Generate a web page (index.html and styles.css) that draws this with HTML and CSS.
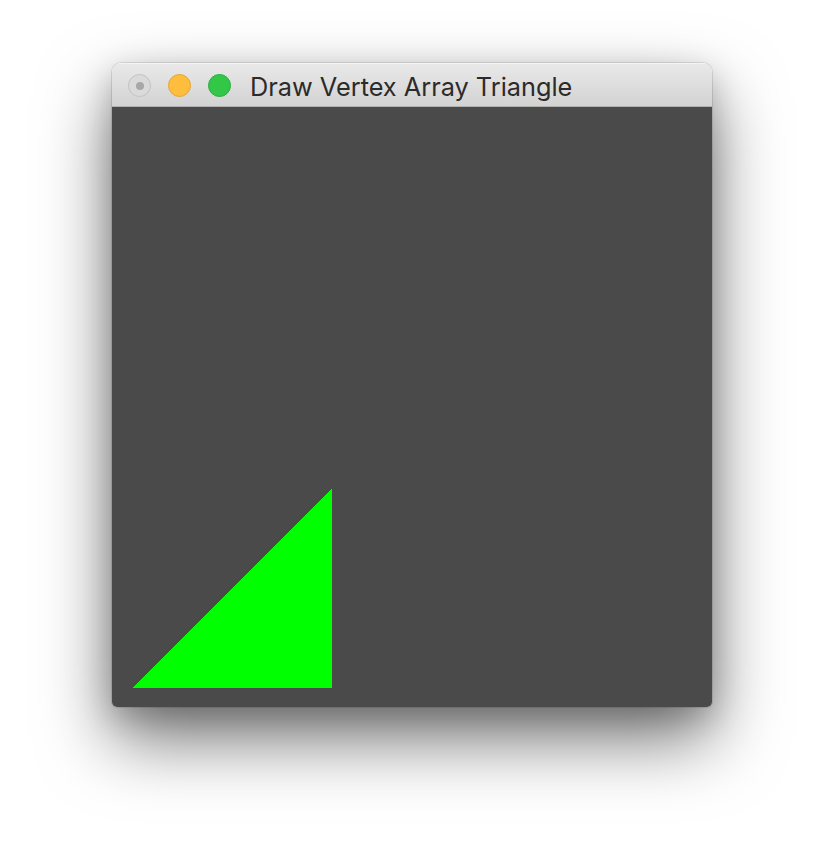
FILE: index.html
```html
<!DOCTYPE html>
<html>
<head>
<meta charset="utf-8">
<link rel="stylesheet" href="styles.css">
</head>
<body>
<div class="page">
  <div class="window">
    <div class="titlebar">
      <div class="lights">
        <span class="light close"><span class="dot"></span></span>
        <span class="light min"></span>
        <span class="light max"></span>
      </div>
      <div class="title">Draw Vertex Array Triangle</div>
    </div>
    <div class="canvas">
      <svg class="gl" width="600" height="600" viewBox="0 0 600 600" shape-rendering="crispEdges">
        <polygon points="20,581 220,581 220,381" fill="#00ff00"/>
      </svg>
    </div>
  </div>
</div>
</body>
</html>
```
FILE: styles.css
```css
html, body {
  margin: 0;
  padding: 0;
  background: #ffffff;
}
.page {
  padding: 63px 0 0 112px;
  width: 824px;
  height: 868px;
  box-sizing: border-box;
}
.window {
  width: 600px;
  border-radius: 9px 9px 5px 5px;
  box-shadow: 0 0 0 1px rgba(0,0,0,0.1), 0 32px 70px rgba(0,0,0,0.55), 0 10px 30px rgba(0,0,0,0.18);
  overflow: hidden;
}
.titlebar {
  height: 41px;
  padding-top: 2px;
  display: flex;
  align-items: center;
  background: linear-gradient(#e9e9e9, #d3d3d3);
  border-bottom: 1px solid #b1b1b1;
  box-shadow: inset 0 1px 0 #f4f4f4;
}
.lights {
  display: flex;
  gap: 17px;
  padding-left: 16px;
}
.light {
  width: 23px;
  height: 23px;
  border-radius: 50%;
  box-sizing: border-box;
  display: flex;
  align-items: center;
  justify-content: center;
}
.close {
  background: #dadada;
  border: 1px solid #c2c2c2;
}
.close .dot {
  width: 8px;
  height: 8px;
  border-radius: 50%;
  background: #a7a7a7;
}
.min {
  background: #ffbd3e;
  border: 1px solid #e5a434;
}
.max {
  background: #33c748;
  border: 1px solid #2bac3d;
}
.title {
  margin-left: 19px;
  font-family: Inter, "Open Sans", sans-serif;
  font-size: 25.3px;
  color: #2b2b2b;
  position: relative;
  top: 1px;
}
.canvas {
  height: 600px;
  background: #4a4a4a;
}
.gl {
  display: block;
}
```
